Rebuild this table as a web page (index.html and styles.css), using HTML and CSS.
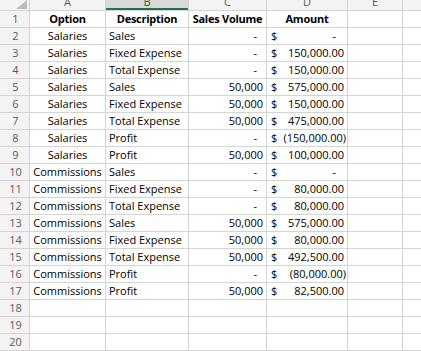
FILE: index.html
```html
<!DOCTYPE html>
<html>
<head>
<meta charset="utf-8">
<link rel="stylesheet" href="styles.css">
</head>
<body>
<div class="sheet">
  <div class="corner"><svg width="29" height="10" viewBox="0 0 29 10"><polygon points="27,0 27,9 16,9" fill="#bdbdbd"/></svg></div>
  <div class="ch">A</div><div class="ch sel">B</div><div class="ch">C</div><div class="ch">D</div><div class="ch">E</div><div class="ch"></div>

  <div class="rh">1</div><div class="hd">Option</div><div class="hd">Description</div><div class="hd">Sales Volume</div><div class="hd">Amount</div><div class="e"></div><div class="e"></div>

  <div class="rh">2</div><div class="ctr">Salaries</div><div class="txt">Sales</div><div class="num dash">-</div><div class="acct zero"><span>$</span><span>-</span></div><div class="e"></div><div class="e"></div>

  <div class="rh">3</div><div class="ctr">Salaries</div><div class="txt">Fixed Expense</div><div class="num dash">-</div><div class="acct"><span>$</span><span>150,000.00</span></div><div class="e"></div><div class="e"></div>

  <div class="rh">4</div><div class="ctr">Salaries</div><div class="txt">Total Expense</div><div class="num dash">-</div><div class="acct"><span>$</span><span>150,000.00</span></div><div class="e"></div><div class="e"></div>

  <div class="rh">5</div><div class="ctr">Salaries</div><div class="txt">Sales</div><div class="num">50,000</div><div class="acct"><span>$</span><span>575,000.00</span></div><div class="e"></div><div class="e"></div>

  <div class="rh">6</div><div class="ctr">Salaries</div><div class="txt">Fixed Expense</div><div class="num">50,000</div><div class="acct"><span>$</span><span>150,000.00</span></div><div class="e"></div><div class="e"></div>

  <div class="rh">7</div><div class="ctr">Salaries</div><div class="txt">Total Expense</div><div class="num">50,000</div><div class="acct"><span>$</span><span>475,000.00</span></div><div class="e"></div><div class="e"></div>

  <div class="rh">8</div><div class="ctr">Salaries</div><div class="txt">Profit</div><div class="num dash">-</div><div class="acct neg"><span>$</span><span>(150,000.00)</span></div><div class="e"></div><div class="e"></div>

  <div class="rh">9</div><div class="ctr">Salaries</div><div class="txt">Profit</div><div class="num">50,000</div><div class="acct"><span>$</span><span>100,000.00</span></div><div class="e"></div><div class="e"></div>

  <div class="rh">10</div><div class="ctr">Commissions</div><div class="txt">Sales</div><div class="num dash">-</div><div class="acct zero"><span>$</span><span>-</span></div><div class="e"></div><div class="e"></div>

  <div class="rh">11</div><div class="ctr">Commissions</div><div class="txt">Fixed Expense</div><div class="num dash">-</div><div class="acct"><span>$</span><span>80,000.00</span></div><div class="e"></div><div class="e"></div>

  <div class="rh">12</div><div class="ctr">Commissions</div><div class="txt">Total Expense</div><div class="num dash">-</div><div class="acct"><span>$</span><span>80,000.00</span></div><div class="e"></div><div class="e"></div>

  <div class="rh">13</div><div class="ctr">Commissions</div><div class="txt">Sales</div><div class="num">50,000</div><div class="acct"><span>$</span><span>575,000.00</span></div><div class="e"></div><div class="e"></div>

  <div class="rh">14</div><div class="ctr">Commissions</div><div class="txt">Fixed Expense</div><div class="num">50,000</div><div class="acct"><span>$</span><span>80,000.00</span></div><div class="e"></div><div class="e"></div>

  <div class="rh">15</div><div class="ctr">Commissions</div><div class="txt">Total Expense</div><div class="num">50,000</div><div class="acct"><span>$</span><span>492,500.00</span></div><div class="e"></div><div class="e"></div>

  <div class="rh">16</div><div class="ctr">Commissions</div><div class="txt">Profit</div><div class="num dash">-</div><div class="acct neg"><span>$</span><span>(80,000.00)</span></div><div class="e"></div><div class="e"></div>

  <div class="rh">17</div><div class="ctr">Commissions</div><div class="txt">Profit</div><div class="num">50,000</div><div class="acct"><span>$</span><span>82,500.00</span></div><div class="e"></div><div class="e"></div>

  <div class="rh">18</div><div class="e"></div><div class="e"></div><div class="e"></div><div class="e"></div><div class="e"></div><div class="e"></div>
  <div class="rh">19</div><div class="e"></div><div class="e"></div><div class="e"></div><div class="e"></div><div class="e"></div><div class="e"></div>
  <div class="rh">20</div><div class="e"></div><div class="e"></div><div class="e"></div><div class="e"></div><div class="e"></div><div class="e"></div>
</div>
</body>
</html>
```
FILE: styles.css
```css
html, body {
  margin: 0;
  padding: 0;
  background: #ffffff;
}
.sheet {
  display: grid;
  grid-template-columns: 29px 75px 82px 77px 80px 54px 1fr;
  grid-template-rows: 10px repeat(20, 16px) 10px;
  gap: 1px;
  background: #d4d4d4;
  width: 421px;
  height: 351px;
  overflow: hidden;
  font-family: "Open Sans", "Liberation Sans", sans-serif;
  font-size: 11px;
  color: #000;
}
.sheet > div {
  background: #fff;
  display: flex;
  align-items: flex-end;
  line-height: 14px;
  padding-bottom: 1px;
  white-space: nowrap;
  overflow: hidden;
  box-sizing: border-box;
}
.sheet > .corner {
  background: #f3f3f3;
  padding: 0;
  align-items: flex-start;
}
.corner svg { display: block; }
.sheet > .ch {
  background: #f3f3f3;
  color: #5b5b5b;
  justify-content: center;
  padding-bottom: 1px;
}
.sheet > .ch.sel {
  background: #d9d9d9;
  color: #1d6a3e;
  box-shadow: inset 0 -2px 0 #217346;
}
.sheet > .rh {
  background: #f3f3f3;
  color: #5b5b5b;
  justify-content: center;
  padding-left: 2px;
}
.hd {
  font-weight: 700;
  letter-spacing: -0.25px;
  justify-content: center;
}
.ctr { justify-content: center; }
.txt { padding-left: 3px; }
.num {
  justify-content: flex-end;
  padding-right: 3px;
}
.num.dash { padding-right: 9px; }
.acct {
  justify-content: space-between;
  padding-left: 4px;
  padding-right: 3px;
}
.acct.neg { padding-right: 1px; }
.acct.zero { padding-right: 11px; }
```
